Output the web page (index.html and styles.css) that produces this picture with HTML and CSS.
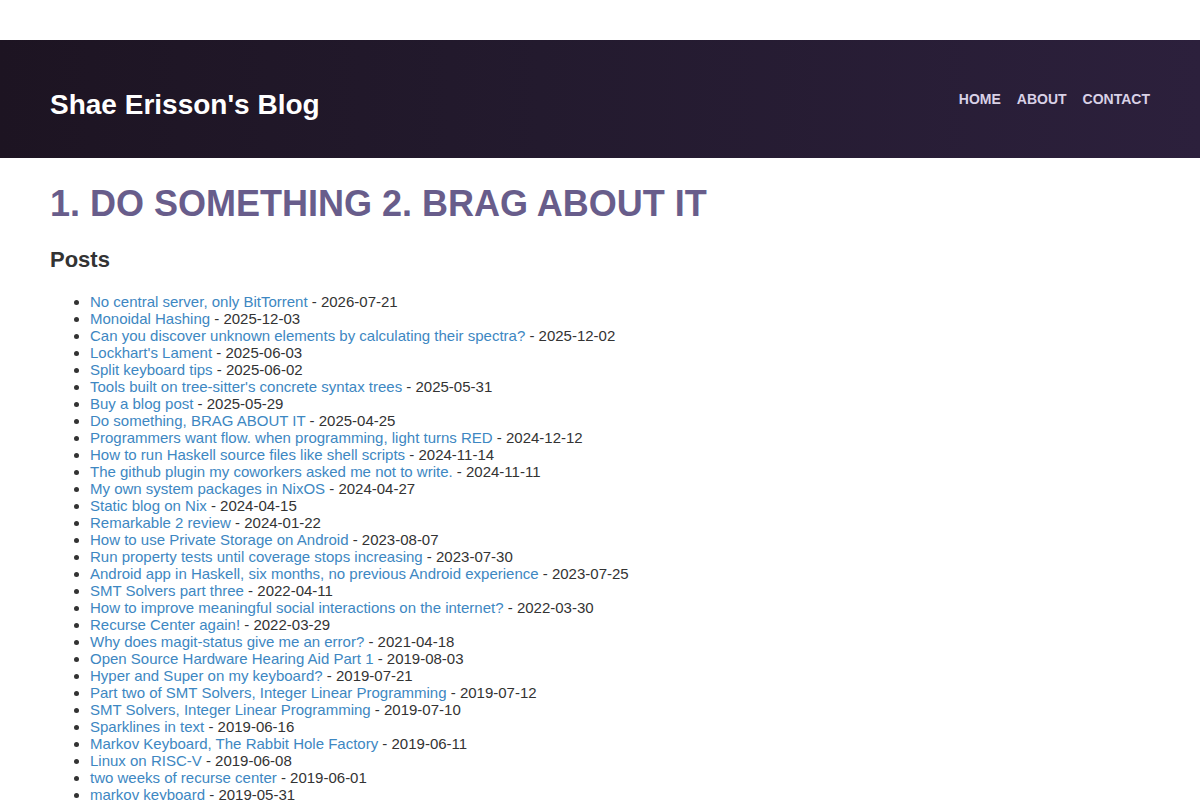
FILE: index.html
```html
<!DOCTYPE html>
<html lang="en">
<head>
<meta charset="utf-8">
<title>Shae Erisson's Blog</title>
<link rel="stylesheet" href="styles.css">
</head>
<body>
<header class="site-header">
  <a class="site-title" href="#">Shae Erisson's Blog</a>
  <nav class="site-nav">
    <a href="#">HOME</a>
    <a href="#">ABOUT</a>
    <a href="#">CONTACT</a>
  </nav>
</header>
<main class="content">
  <h1 class="tagline">1. DO SOMETHING 2. BRAG ABOUT IT</h1>
  <h2 class="section-title">Posts</h2>
  <ul class="posts">
    <li><a href="#">No central server, only BitTorrent</a> - 2026-07-21</li>
    <li><a href="#">Monoidal Hashing</a> - 2025-12-03</li>
    <li><a href="#">Can you discover unknown elements by calculating their spectra?</a> - 2025-12-02</li>
    <li><a href="#">Lockhart's Lament</a> - 2025-06-03</li>
    <li><a href="#">Split keyboard tips</a> - 2025-06-02</li>
    <li><a href="#">Tools built on tree-sitter's concrete syntax trees</a> - 2025-05-31</li>
    <li><a href="#">Buy a blog post</a> - 2025-05-29</li>
    <li><a href="#">Do something, BRAG ABOUT IT</a> - 2025-04-25</li>
    <li><a href="#">Programmers want flow. when programming, light turns RED</a> - 2024-12-12</li>
    <li><a href="#">How to run Haskell source files like shell scripts</a> - 2024-11-14</li>
    <li><a href="#">The github plugin my coworkers asked me not to write.</a> - 2024-11-11</li>
    <li><a href="#">My own system packages in NixOS</a> - 2024-04-27</li>
    <li><a href="#">Static blog on Nix</a> - 2024-04-15</li>
    <li><a href="#">Remarkable 2 review</a> - 2024-01-22</li>
    <li><a href="#">How to use Private Storage on Android</a> - 2023-08-07</li>
    <li><a href="#">Run property tests until coverage stops increasing</a> - 2023-07-30</li>
    <li><a href="#">Android app in Haskell, six months, no previous Android experience</a> - 2023-07-25</li>
    <li><a href="#">SMT Solvers part three</a> - 2022-04-11</li>
    <li><a href="#">How to improve meaningful social interactions on the internet?</a> - 2022-03-30</li>
    <li><a href="#">Recurse Center again!</a> - 2022-03-29</li>
    <li><a href="#">Why does magit-status give me an error?</a> - 2021-04-18</li>
    <li><a href="#">Open Source Hardware Hearing Aid Part 1</a> - 2019-08-03</li>
    <li><a href="#">Hyper and Super on my keyboard?</a> - 2019-07-21</li>
    <li><a href="#">Part two of SMT Solvers, Integer Linear Programming</a> - 2019-07-12</li>
    <li><a href="#">SMT Solvers, Integer Linear Programming</a> - 2019-07-10</li>
    <li><a href="#">Sparklines in text</a> - 2019-06-16</li>
    <li><a href="#">Markov Keyboard, The Rabbit Hole Factory</a> - 2019-06-11</li>
    <li><a href="#">Linux on RISC-V</a> - 2019-06-08</li>
    <li><a href="#">two weeks of recurse center</a> - 2019-06-01</li>
    <li><a href="#">markov keyboard</a> - 2019-05-31</li>
  </ul>
</main>
</body>
</html>
```

FILE: styles.css
```css
html, body {
  margin: 0;
  padding: 0;
  background: #ffffff;
}

body {
  font-family: "Liberation Sans", Arial, sans-serif;
  color: #333333;
}

.site-header {
  margin-top: 40px;
  height: 118px;
  box-sizing: border-box;
  padding: 49px 50px 0;
  display: flex;
  justify-content: space-between;
  align-items: flex-start;
  background: linear-gradient(90deg, #1d1422 0%, #231a2e 45%, #2c203c 100%);
}

.site-title {
  font-size: 28px;
  line-height: 32px;
  font-weight: bold;
  color: #ffffff;
  text-decoration: none;
}

.site-nav {
  display: flex;
  gap: 16px;
  margin-top: 2px;
}

.site-nav a {
  font-size: 14px;
  line-height: 16px;
  font-weight: bold;
  color: #d9d1e6;
  text-decoration: none;
}

.content {
  padding: 0 50px;
}

.tagline {
  margin: 25px 0 0;
  font-size: 36px;
  line-height: 42px;
  font-weight: bold;
  color: #685d8b;
}

.section-title {
  margin: 22px 0 20px;
  font-size: 22px;
  line-height: 26px;
  font-weight: bold;
  color: #333333;
}

.posts {
  margin: 0;
  padding-left: 40px;
  font-size: 15px;
  line-height: 17px;
  color: #333333;
}

.posts a {
  color: #3d87c2;
  text-decoration: none;
}
```
